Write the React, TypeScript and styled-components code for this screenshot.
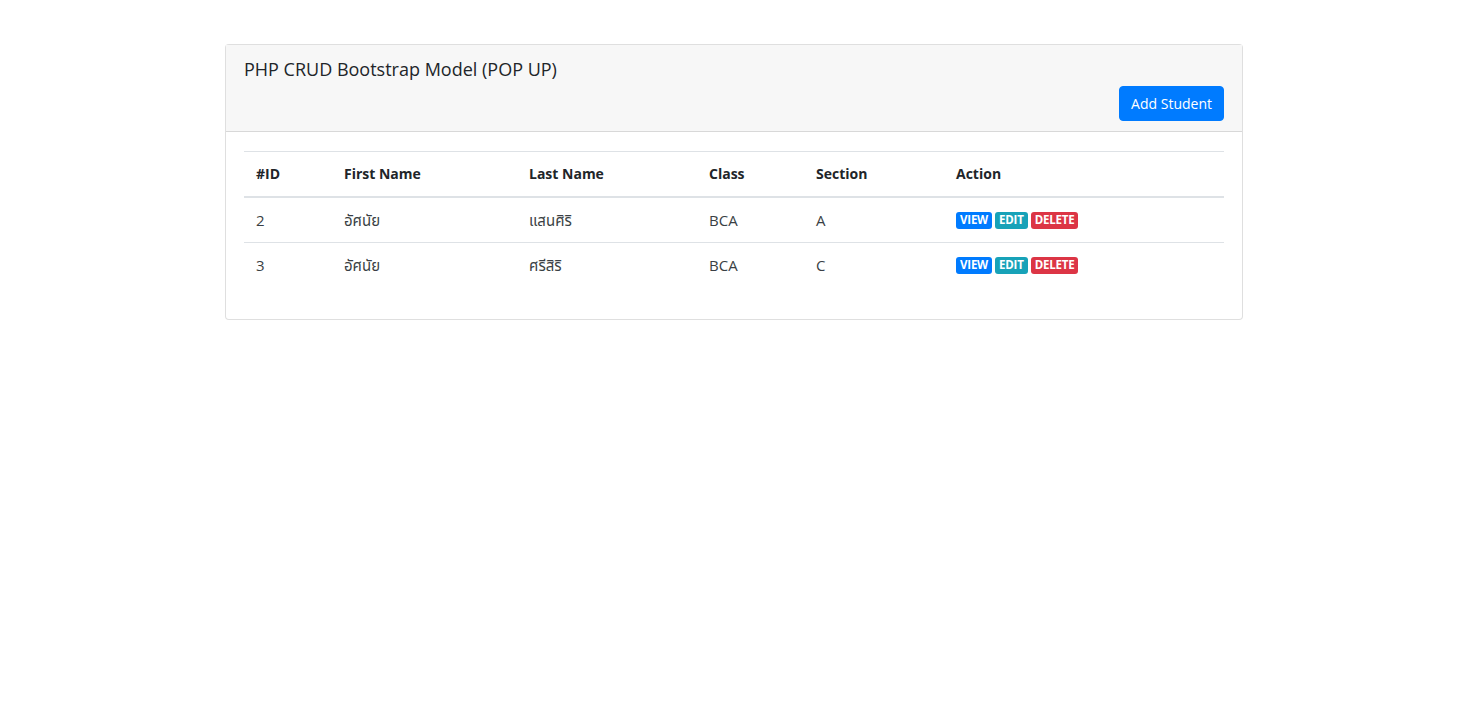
import React from "react";
import styled, { createGlobalStyle } from "styled-components";

const Global = createGlobalStyle`
  html, body { margin: 0; padding: 0; background: #fff; }
  body {
    font-family: "Open Sans", "Noto Sans", "Noto Sans Thai", sans-serif;
    font-size: 16px;
    line-height: 1.5;
    color: #212529;
  }
`;

const Page = styled.div`
  padding-top: 44px;
`;

const Card = styled.div`
  width: 1018px;
  margin: 0 auto;
  border: 1px solid rgba(0, 0, 0, 0.125);
  border-radius: 4px;
  background: #fff;
  box-sizing: border-box;
`;

const CardHeader = styled.div`
  background: #f7f7f7;
  border-bottom: 1px solid rgba(0, 0, 0, 0.125);
  padding: 12px 18px 10px 18px;
  display: flex;
  flex-direction: column;
`;

const Title = styled.h5`
  margin: 0;
  font-size: 18px;
  font-weight: 500;
  line-height: 24px;
`;

const HeaderActions = styled.div`
  display: flex;
  justify-content: flex-end;
  margin-top: 5px;
`;

const PrimaryButton = styled.button`
  font-family: inherit;
  font-size: 14px;
  line-height: 21px;
  padding: 6px 11px;
  border: 1px solid #007bff;
  border-radius: 4px;
  background: #007bff;
  color: #fff;
  cursor: pointer;
`;

const CardBody = styled.div`
  padding: 19px 18px 16px 18px;
`;

const Table = styled.table`
  width: 100%;
  border-collapse: collapse;
  margin-bottom: 16px;
  font-size: 15px;
`;

const Th = styled.th<{ $w?: number }>`
  text-align: left;
  font-weight: 700;
  font-size: 14px;
  padding: 10px 12px;
  line-height: 24px;
  border-top: 1px solid #dee2e6;
  border-bottom: 2px solid #dee2e6;
  width: ${(p) => (p.$w ? `${p.$w}px` : "auto")};
  box-sizing: border-box;
`;

const Td = styled.td`
  padding: 10px 12px;
  line-height: 24px;
  border-top: 1px solid #dee2e6;
  color: #3a3f44;
  font-weight: 400;
  vertical-align: top;
`;

const Row = styled.tr`
  &:first-child td { border-top: none; }
`;

const Actions = styled.div`
  display: flex;
  gap: 3px;
  padding-top: 4px;
`;

const Badge = styled.a<{ $bg: string }>`
  display: inline-block;
  font-size: 11.5px;
  font-weight: 700;
  line-height: 1;
  padding: 2px 4px 3px;
  border-radius: 3px;
  background: ${(p) => p.$bg};
  color: #fff;
  text-decoration: none;
  letter-spacing: -0.2px;
`;

const students = [
  { id: 2, first: "อัศนัย", last: "แสนศิริ", cls: "BCA", section: "A" },
  { id: 3, first: "อัศนัย", last: "ศรีสิริ", cls: "BCA", section: "C" },
];

export default function App() {
  return (
    <>
      <Global />
      <Page>
        <Card>
          <CardHeader>
            <Title>PHP CRUD Bootstrap Model (POP UP)</Title>
            <HeaderActions>
              <PrimaryButton type="button">Add Student</PrimaryButton>
            </HeaderActions>
          </CardHeader>
          <CardBody>
            <Table>
              <thead>
                <tr>
                  <Th $w={88}>#ID</Th>
                  <Th $w={185}>First Name</Th>
                  <Th $w={180}>Last Name</Th>
                  <Th $w={107}>Class</Th>
                  <Th $w={140}>Section</Th>
                  <Th>Action</Th>
                </tr>
              </thead>
              <tbody>
                {students.map((s) => (
                  <Row key={s.id}>
                    <Td>{s.id}</Td>
                    <Td>{s.first}</Td>
                    <Td>{s.last}</Td>
                    <Td>{s.cls}</Td>
                    <Td>{s.section}</Td>
                    <Td>
                      <Actions>
                        <Badge href="#" $bg="#007bff">VIEW</Badge>
                        <Badge href="#" $bg="#17a2b8">EDIT</Badge>
                        <Badge href="#" $bg="#dc3545">DELETE</Badge>
                      </Actions>
                    </Td>
                  </Row>
                ))}
              </tbody>
            </Table>
          </CardBody>
        </Card>
      </Page>
    </>
  );
}
